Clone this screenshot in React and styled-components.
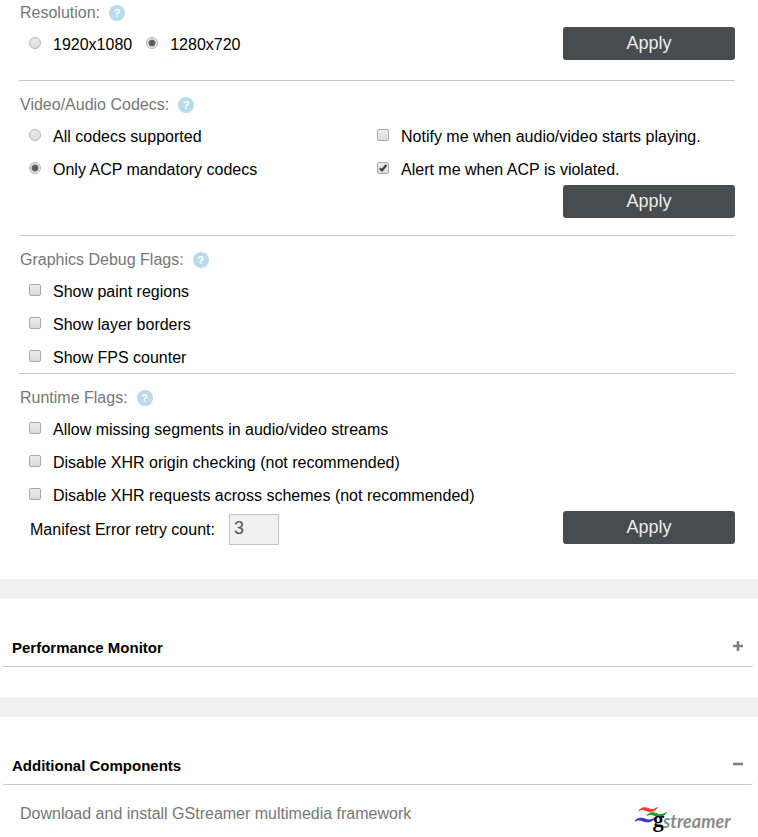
import React from "react";
import styled, { createGlobalStyle, css } from "styled-components";

const GlobalStyle = createGlobalStyle`
  *, *::before, *::after { box-sizing: border-box; }
  body {
    margin: 0;
    background: #fff;
    color: #000;
    font-family: "Liberation Sans", Arial, sans-serif;
    font-size: 16px;
  }
`;

const Settings = styled.main`
  padding: 0 23px 35px 19px;
`;

const Section = styled.section`
  padding-top: 11px;
  padding-bottom: ${({ $bottom = 0 }) => $bottom}px;
  border-bottom: 1px solid #c8c8c8;
  &:first-child { padding-top: 0; }
  &:last-child { border-bottom: 0; }
`;

const SectionTitle = styled.h2`
  display: flex;
  align-items: center;
  gap: 9px;
  height: 27px;
  margin: 0;
  padding-bottom: 1px;
  font-size: 16px;
  font-weight: 400;
  line-height: 24px;
  color: #777;
`;

const TitleText = styled.span`
  padding-left: 1px;
`;

const HelpButton = styled.button`
  display: grid;
  place-items: center;
  width: 16px;
  height: 16px;
  padding: 0;
  border: 0;
  border-radius: 50%;
  background: #b9dbeb;
  color: #fff;
  font: 700 11px/16px "Liberation Sans", Arial, sans-serif;
`;

const Row = styled.div`
  display: flex;
  align-items: center;
  gap: 14px;
  height: 33px;
  padding-left: 10px;
`;

const Columns = styled.div`
  display: grid;
  grid-template-columns: 1fr 1fr;
`;

const SideRow = styled(Row)`
  padding-left: 0;
`;

const Option = styled.label`
  display: inline-flex;
  align-items: center;
  gap: 12px;
  line-height: 20px;
  padding-top: 3px;
  white-space: nowrap;
`;

const Box = styled.span`
  display: grid;
  width: 12px;
  height: 12px;
  margin-bottom: 5px;
  & > * { grid-area: 1 / 1; }
`;

const control = css`
  appearance: none;
  width: 12px;
  height: 12px;
  margin: 0;
  border: 1px solid #a9a9a9;
  background: linear-gradient(#ececec, #dcdcdc);
`;

const RadioInput = styled.input.attrs({ type: "radio" })`
  ${control}
  border-color: #b4b4b4;
  border-radius: 50%;
  &:checked {
    background: radial-gradient(circle, #5c5c5c 0 2px, #666 3px, #e8e8e8 4px);
  }
`;

const CheckInput = styled.input.attrs({ type: "checkbox" })`
  ${control}
  border-radius: 2px;
  & + svg { visibility: hidden; pointer-events: none; z-index: 1; }
  &:checked + svg { visibility: visible; }
`;

const ActionRow = styled.div`
  display: flex;
  justify-content: flex-end;
  align-items: center;
`;

const Spread = styled.div`
  display: flex;
  justify-content: space-between;
`;

const ApplyButton = styled.button`
  width: 172px;
  height: 33px;
  padding: 0 0 2px;
  border: 0;
  border-radius: 3px;
  background: #474c50;
  color: #eee;
  font: 400 18px/20px "Liberation Sans", Arial, sans-serif;
`;

const FieldLabel = styled.label`
  padding-top: 4px;
  padding-left: 1px;
`;

const CountInput = styled.input`
  width: 50px;
  height: 31px;
  margin-top: 4px;
  padding: 0 4px 2px;
  border: 1px solid #c4c4c4;
  background: #f1f1f1;
  color: #555;
  font: 400 18px/20px "Liberation Sans", Arial, sans-serif;
`;

const Panel = styled.section`
  border-top: 20px solid #f1f1f1;
  padding: 32px 5px 30px 2px;
`;

const PanelHeader = styled.h2`
  display: flex;
  height: 36px;
  margin: 0;
  border-bottom: 1px solid #c8c8c8;
  border-radius: 3px;
`;

const PanelToggle = styled.button`
  display: flex;
  flex: 1;
  align-items: center;
  justify-content: space-between;
  padding: 0 10px 1px;
  border: 0;
  background: none;
  color: #000;
  font: 700 15px/20px "Liberation Sans", Arial, sans-serif;
  & svg { margin-bottom: 4px; }
`;

const PanelBody = styled.div`
  display: flex;
  align-items: flex-start;
  justify-content: space-between;
  padding: 18px 18px 0;
  line-height: 22px;
`;

const DownloadLink = styled.a`
  color: #777;
  text-decoration: none;
`;

const Logo = styled.svg`
  display: block;
  margin-top: 3px;
`;

function Radio({ name, label, checked }) {
  return (
    <Option>
      <Box><RadioInput name={name} defaultChecked={checked} /></Box>
      {label}
    </Option>
  );
}

function Check({ label, checked }) {
  return (
    <Option>
      <Box>
        <CheckInput defaultChecked={checked} />
        <svg width="12" height="12" viewBox="0 0 12 12" aria-hidden="true">
          <path d="M2.8 6.2 5 8.4 9.3 3" fill="none" stroke="#444" strokeWidth="2.3" />
        </svg>
      </Box>
      {label}
    </Option>
  );
}

function Title({ children }) {
  return (
    <SectionTitle>
      <TitleText>{children}</TitleText>
      <HelpButton type="button">?</HelpButton>
    </SectionTitle>
  );
}

function Header({ title, open }) {
  return (
    <PanelHeader>
      <PanelToggle type="button" aria-expanded={open}>
        {title}
        <svg width="10" height="10" viewBox="0 0 10 10" aria-hidden="true">
          <path d={open ? "M0 5H10" : "M0 5H10M5 0V10"} stroke="#808080" strokeWidth="2.6" />
        </svg>
      </PanelToggle>
    </PanelHeader>
  );
}

function GStreamerLogo() {
  return (
    <Logo width="100" height="28" viewBox="0 0 100 28" role="img" aria-label="gstreamer">
      <path d="M4 4.500C7 1 10 1.200 13 2.500S19 4 22.500 1.500C19 6 15 6 11 4.500S7 3 4 4.500Z" fill="#f33" stroke="#f33" strokeWidth="1" />
      <path d="M12 9.500C15 6 18 6.200 21 7.500S28 9 31.500 6.500C28 11 24 11 20 9.500S15 8 12 9.500Z" fill="#292" stroke="#292" strokeWidth="1" />
      <path d="M0 15C3 11.500 7 11.700 10 13S16 14.500 20 12C16 16.500 12 16.500 8 15S3 13.500 0 15Z" fill="#33c" stroke="#33c" strokeWidth="1" />
      <text x="18" y="21" fill="#000" fontFamily="Noto Serif, Liberation Serif, serif" fontSize="20" fontWeight="700">g</text>
      <text x="28" y="22" fill="#8c8c8c" fontFamily="Lato, sans-serif" fontSize="18" fontWeight="700" fontStyle="italic">streamer</text>
    </Logo>
  );
}

export default function App() {
  return (
    <>
      <GlobalStyle />
      <Settings>
        <Section $bottom={20}>
          <Title>Resolution:</Title>
          <Spread>
            <Row>
              <Radio name="resolution" label="1920x1080" />
              <Radio name="resolution" label="1280x720" checked />
            </Row>
            <ApplyButton type="button">Apply</ApplyButton>
          </Spread>
        </Section>

        <Section $bottom={17}>
          <Title>Video/Audio Codecs:</Title>
          <Columns>
            <Row><Radio name="codecs" label="All codecs supported" /></Row>
            <SideRow><Check label="Notify me when audio/video starts playing." /></SideRow>
            <Row><Radio name="codecs" label="Only ACP mandatory codecs" checked /></Row>
            <SideRow><Check label="Alert me when ACP is violated." checked /></SideRow>
          </Columns>
          <ActionRow><ApplyButton type="button">Apply</ApplyButton></ActionRow>
        </Section>

        <Section>
          <Title>Graphics Debug Flags:</Title>
          <Row><Check label="Show paint regions" /></Row>
          <Row><Check label="Show layer borders" /></Row>
          <Row><Check label="Show FPS counter" /></Row>
        </Section>

        <Section>
          <Title>Runtime Flags:</Title>
          <Row><Check label="Allow missing segments in audio/video streams" /></Row>
          <Row><Check label="Disable XHR origin checking (not recommended)" /></Row>
          <Row><Check label="Disable XHR requests across schemes (not recommended)" /></Row>
          <Spread>
            <Row>
              <FieldLabel htmlFor="retry-count">Manifest Error retry count:</FieldLabel>
              <CountInput id="retry-count" type="text" defaultValue="3" />
            </Row>
            <ApplyButton type="button">Apply</ApplyButton>
          </Spread>
        </Section>
      </Settings>

      <Panel>
        <Header title="Performance Monitor" open={false} />
      </Panel>
      <Panel>
        <Header title="Additional Components" open />
        <PanelBody>
          <DownloadLink href="#gstreamer">Download and install GStreamer multimedia framework</DownloadLink>
          <GStreamerLogo />
        </PanelBody>
      </Panel>
    </>
  );
}
